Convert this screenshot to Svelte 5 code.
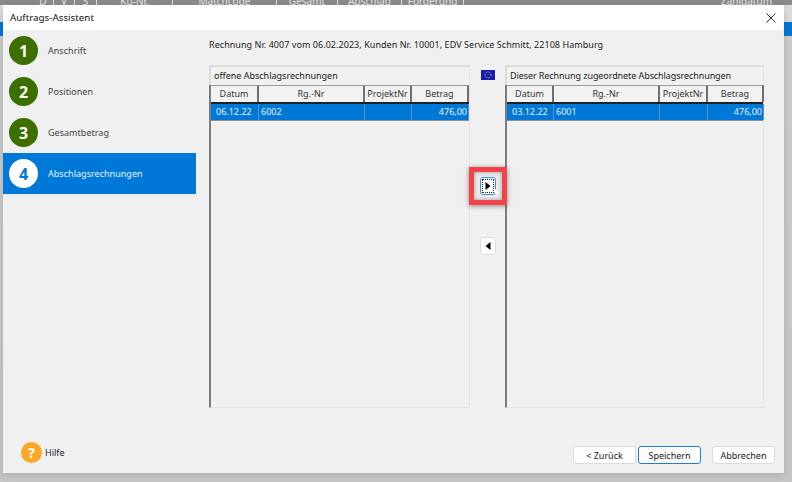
<script>
  const steps = [
    { n: 1, label: 'Anschrift' },
    { n: 2, label: 'Positionen' },
    { n: 3, label: 'Gesamtbetrag' },
    { n: 4, label: 'Abschlagsrechnungen', active: true }
  ];
  const bgCols = [
    { t: 'D', w: 21 }, { t: 'V', w: 21 }, { t: 'S', w: 22 }, { t: 'Ku-Nr.', w: 76 },
    { t: 'Matchcode', w: 104 }, { t: 'Gesamt', w: 61 }, { t: 'Abschlag', w: 64 }, { t: 'Forderung', w: 62 }
  ];
  const panels = [
    { title: 'offene Abschlagsrechnungen', widths: [48, 106, 47, 57], row: ['06.12.22', '6002', '', '476,00'] },
    { title: 'Dieser Rechnung zugeordnete Abschlagsrechnungen', widths: [47, 106, 48, 56], row: ['03.12.22', '6001', '', '476,00'] }
  ];
  const heads = ['Datum', 'Rg.-Nr', 'ProjektNr', 'Betrag'];
</script>

<div class="page">
  <div class="bgheader">
    <div class="bgcols">
      {#each bgCols as c}
        <span class="bgcol" style="width:{c.w}px">{c.t}</span>
      {/each}
    </div>
    <span class="bgdate">Zahldatum</span>
  </div>
  <div class="sliver left"></div>
  <div class="sliver right"></div>

  <div class="dialog">
    <header class="titlebar">
      <span>Auftrags-Assistent</span>
      <svg class="close" width="10" height="10" viewBox="0 0 10 10" aria-hidden="true">
        <path d="M.5.5l9 9M9.5.5l-9 9" stroke="#333" fill="none" stroke-width="1" />
      </svg>
    </header>

    <div class="body">
      <nav class="steps">
        {#each steps as s}
          <div class="step" class:active={s.active}>
            <span class="num">{s.n}</span>
            <span class="steplabel">{s.label}</span>
          </div>
        {/each}
        <div class="help">
          <span class="helpicon">?</span>
          <span>Hilfe</span>
        </div>
      </nav>

      <main class="content">
        <p class="summary">Rechnung Nr. 4007 vom 06.02.2023, Kunden Nr. 10001, EDV Service Schmitt, 22108 Hamburg</p>

        <div class="columns">
          {#each panels as p, i}
            <section class="panel">
              <div class="paneltitle">{p.title}</div>
              <div class="tablewrap">
                <div class="thead">
                  {#each heads as h, j}
                    <span class="th" style="width:{p.widths[j]}px">{h}</span>
                  {/each}
                </div>
                <div class="trow">
                  {#each p.row as v, j}
                    <span class="td" class:num-cell={j === 3} style="width:{p.widths[j]}px">{v}</span>
                  {/each}
                </div>
              </div>
            </section>

            {#if i === 0}
              <div class="mid">
                <svg class="flag" width="14" height="10" viewBox="0 0 14 10" aria-hidden="true">
                  <rect width="14" height="10" fill="#1a1ab4" />
                  <circle cx="7" cy="5" r="3" fill="none" stroke="#c9c24a" stroke-width="1" stroke-dasharray="1 .9" />
                </svg>
                <div class="highlight">
                  <button class="arrow focus" aria-label="Zuordnen">
                    <svg width="8" height="10" viewBox="0 0 8 10" aria-hidden="true"><path d="M1.5 1l5 4-5 4z" fill="#000" /></svg>
                  </button>
                  <svg class="cursor" width="6" height="8" viewBox="0 0 6 8" aria-hidden="true"><path d="M0 0l6 5H3.5L2 8z" fill="#fff" /></svg>
                </div>
                <button class="arrow back" aria-label="Entfernen">
                  <svg width="8" height="10" viewBox="0 0 8 10" aria-hidden="true"><path d="M6.5 1L1.5 5l5 4z" fill="#000" /></svg>
                </button>
              </div>
            {/if}
          {/each}
        </div>

        <footer class="buttons">
          <button class="btn">&lt; Zurück</button>
          <button class="btn primary">Speichern</button>
          <button class="btn cancel">Abbrechen</button>
        </footer>
      </main>
    </div>
  </div>
</div>

<style>
  :global(body) {
    margin: 0;
    background: #c4c4c4;
  }
  .page {
    position: relative;
    width: 792px;
    height: 482px;
    overflow: hidden;
    background: linear-gradient(#dedede 5px, #d8d8d8 22px, #cbcbcb 40px, #c6c6c6);
    font-family: "Noto Sans", "Open Sans", sans-serif;
    font-size: 9px;
    color: #222;
  }
  .bgheader {
    height: 5px;
    background: #8b8b8b;
    position: relative;
    overflow: hidden;
    color: #e8e8e8;
    font-size: 10px;
    line-height: 5px;
  }
  .bgcols {
    display: flex;
    padding-left: 33px;
    margin-top: -1px;
  }
  .bgcol {
    flex: none;
    text-align: center;
    border-right: 1px solid #ddd;
    box-sizing: border-box;
    height: 7px;
  }
  .bgdate {
    position: absolute;
    right: 20px;
    top: -1px;
  }
  .sliver {
    position: absolute;
    top: 22px;
    height: 14px;
    background: #0078d7;
  }
  .sliver.left { left: 0; width: 3px; }
  .sliver.right { right: 0; width: 8px; }
  .dialog {
    position: absolute;
    left: 3px;
    top: 5px;
    width: 781px;
    height: 468px;
    background: #f0f0f0;
    display: flex;
    flex-direction: column;
    box-shadow: 0 2px 8px rgba(0, 0, 0, 0.14);
  }
  .titlebar {
    height: 25px;
    flex: none;
    background: #fff;
    display: flex;
    align-items: center;
    justify-content: space-between;
    padding: 0 8px 0 7px;
    font-size: 9.8px;
    color: #111;
  }
  .body {
    flex: 1;
    display: flex;
    min-height: 0;
  }
  .steps {
    width: 193px;
    flex: none;
    display: flex;
    flex-direction: column;
    position: relative;
  }
  .step {
    height: 41px;
    display: flex;
    align-items: center;
    gap: 10px;
    padding-left: 6px;
    color: #444;
    letter-spacing: 0.03px;
  }
  .step.active {
    background: #0078d7;
    color: #e8f3fc;
  }
  .num {
    width: 29px;
    height: 29px;
    border-radius: 50%;
    background: #3c6e00;
    color: #fff;
    display: flex;
    align-items: center;
    justify-content: center;
    font-family: "Open Sans", sans-serif;
    font-weight: 700;
    font-size: 16px;
    flex: none;
  }
  .active .num {
    background: #fff;
    color: #0078d7;
  }
  .help {
    position: absolute;
    left: 18px;
    top: 412px;
    display: flex;
    align-items: center;
    gap: 3px;
    color: #1a1a2a;
  }
  .helpicon {
    width: 21px;
    height: 21px;
    border-radius: 50%;
    background: #f9a825;
    color: #fff;
    font-weight: 700;
    font-size: 14px;
    display: flex;
    align-items: center;
    justify-content: center;
  }
  .content {
    flex: 1;
    min-width: 0;
    padding-left: 13px;
    display: flex;
    flex-direction: column;
  }
  .summary {
    margin: 0;
    height: 35px;
    line-height: 29px;
    color: #222;
    letter-spacing: 0.05px;
  }
  .columns {
    display: flex;
    height: 343px;
  }
  .panel {
    width: 261px;
    flex: none;
    box-sizing: border-box;
    display: flex;
    flex-direction: column;
    border-top: 2px solid #dcdcdc;
    border-left: 2px solid #dcdcdc;
    border-right: 1px solid #e4e4e4;
  }
  .panel:last-child {
    width: 259px;
  }
  .panel:last-child .paneltitle {
    letter-spacing: -0.08px;
  }
  .paneltitle {
    height: 18px;
    line-height: 18px;
    padding-left: 3px;
    flex: none;
    color: #222;
  }
  .tablewrap {
    flex: 1;
    margin-left: -2px;
    border-left: 2px solid #7d7d7d;
    border-bottom: 1px solid #e4e4e4;
    display: flex;
    flex-direction: column;
  }
  .thead {
    display: flex;
    height: 17px;
    border-bottom: 2px solid #222;
    flex: none;
    background: #f2f2f2;
  }
  .th {
    flex: none;
    box-sizing: border-box;
    text-align: center;
    line-height: 16px;
    border-right: 2px solid #6f6f6f;
    border-top: 1px solid #9a9a9a;
    color: #333;
  }
  .trow {
    display: flex;
    height: 16px;
    background: #0078d7;
    border-bottom: 1px solid #8f8f8f;
    color: #e6f2fb;
    flex: none;
  }
  .td {
    flex: none;
    box-sizing: border-box;
    line-height: 16px;
    padding: 0 1px 0 5px;
    border-right: 1px solid #5a93c4;
    white-space: nowrap;
  }
  .td:nth-child(2) {
    padding-left: 2px;
  }
  .num-cell {
    text-align: right;
  }
  .mid {
    width: 36px;
    flex: none;
    position: relative;
    margin-right: -1px;
  }
  .flag {
    position: absolute;
    left: 11px;
    top: 5px;
  }
  .highlight {
    position: absolute;
    left: -1px;
    top: 102px;
    width: 38px;
    height: 38px;
    box-sizing: border-box;
    border: 5px solid #f2434a;
    background: #ececec;
    display: flex;
    align-items: center;
    justify-content: center;
    box-shadow: 0 1px 5px rgba(0, 0, 0, 0.45), inset 0 0 4px rgba(0, 0, 0, 0.35);
  }
  .cursor {
    position: absolute;
    left: 20px;
    top: 16px;
  }
  .arrow {
    width: 16px;
    height: 18px;
    padding: 0;
    border: 1px solid #ddd;
    border-radius: 3px;
    background: #fdfdfd;
    display: flex;
    align-items: center;
    justify-content: center;
  }
  .arrow.focus {
    border: 1px solid #3f8fd2;
    outline: 1px dotted #222;
    outline-offset: -3px;
  }
  .arrow.back {
    position: absolute;
    left: 10px;
    top: 172px;
  }
  .buttons {
    display: flex;
    padding: 38px 0 0 364px;
    align-items: center;
  }
  .btn {
    height: 18px;
    width: 63px;
    padding: 0;
    border: 1px solid #dcdcdc;
    border-radius: 3px;
    background: #fdfdfd;
    font: inherit;
    color: #222;
    margin-right: 2px;
  }
  .btn.primary {
    border-color: #1f7fcf;
    margin-right: 11px;
  }
</style>
